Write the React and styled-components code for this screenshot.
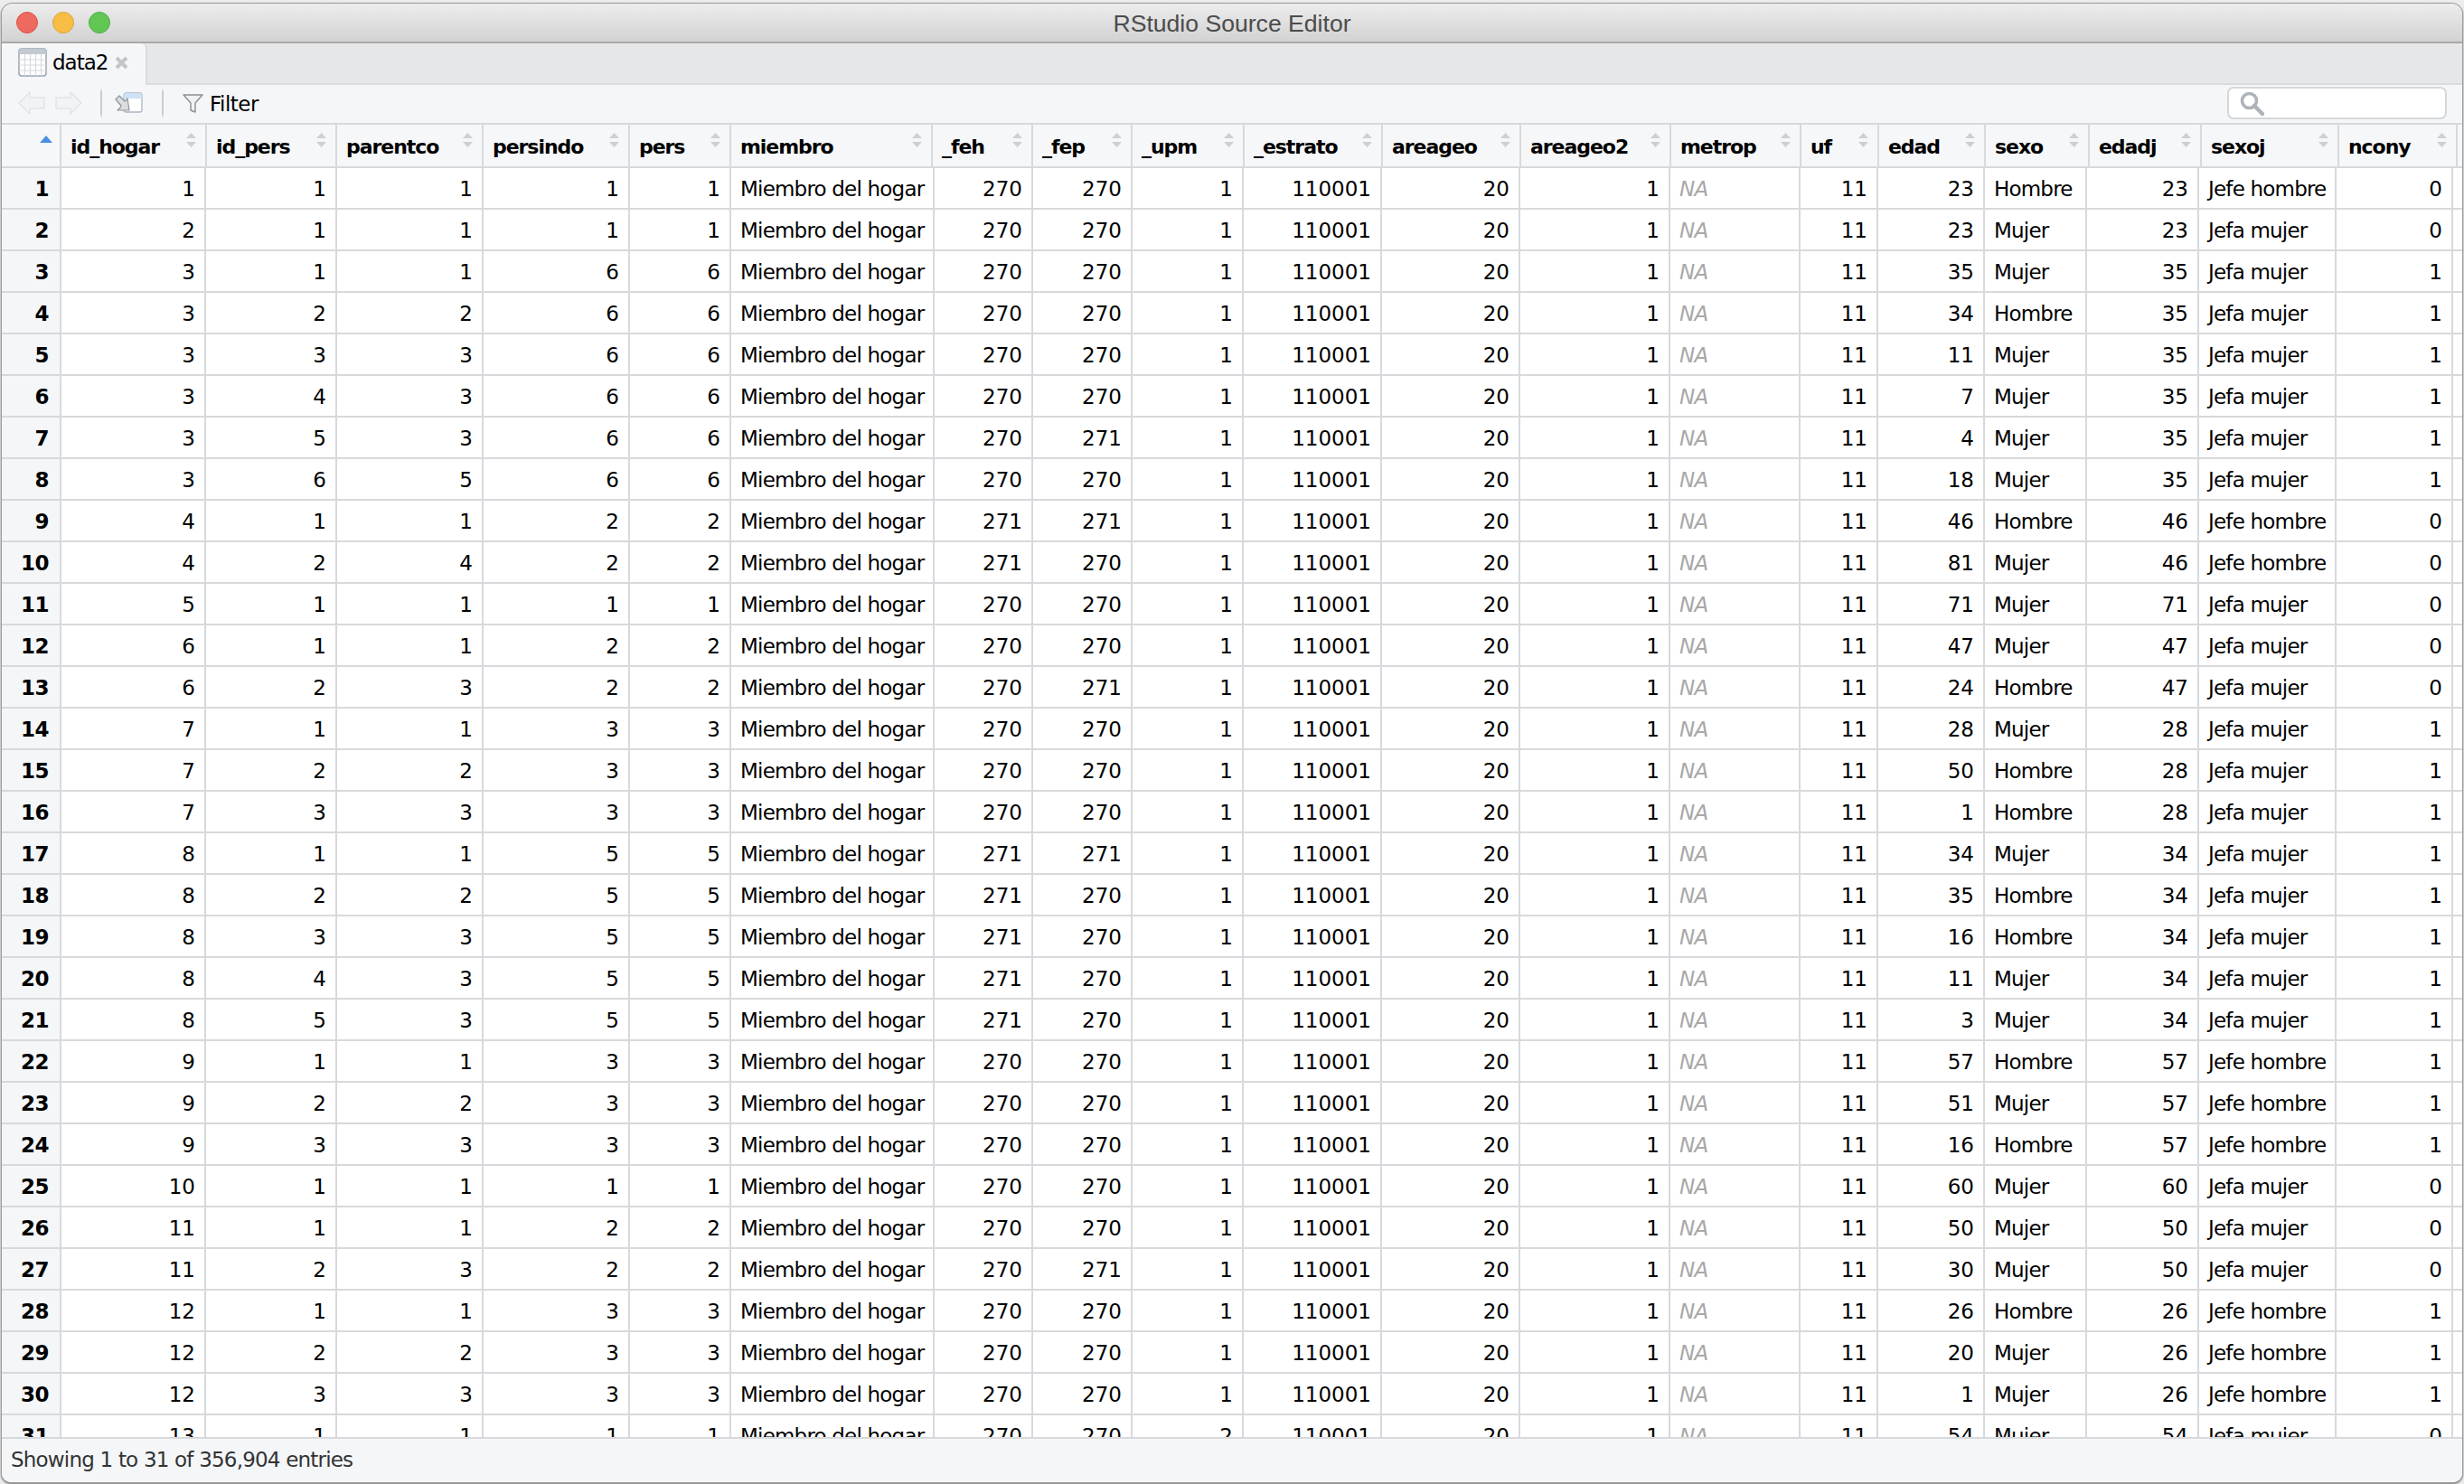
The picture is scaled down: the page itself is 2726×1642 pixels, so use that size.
import React from 'react';
import styled, { createGlobalStyle } from 'styled-components';

const Global = createGlobalStyle`
  html, body { margin: 0; padding: 0; background: #ececec; }
  #root { width: 2726px; height: 1642px; }
`;

const headCols = '66px 161px 144px 162px 162px 112px 223px 111px 110px 124px 153px 153px 166px 144px 86px 118px 115px 124px 152px 131px 1fr';
const bodyCols = '66px 160px 145px 162px 162px 112px 225px 109px 110px 123px 153px 153px 166px 144px 86px 118px 113px 124px 152px 129px 1fr';

const Page = styled.div`
  box-sizing: border-box;
  width: 2726px;
  height: 1642px;
  padding: 4px 2px 2px;
  overflow: hidden;
`;
const Window = styled.div`
  width: 2722px;
  height: 1636px;
  display: flex;
  flex-direction: column;
  border-radius: 12px 12px 10px 10px;
  overflow: hidden;
  box-shadow: 0 0 0 1px #9c9c9c, 0 1px 2px 1px #777;
  background: #fff;
  color: #000;
  font-family: "DejaVu Sans", sans-serif;
`;
const TitleBar = styled.div`
  flex: none;
  box-sizing: border-box;
  height: 44px;
  display: grid;
  grid-template-columns: 1fr auto 1fr;
  align-items: center;
  background: linear-gradient(#ededed, #d2d2d2);
  border-bottom: 2px solid #a9a9a9;
`;
const Lights = styled.div`
  display: flex;
  gap: 16px;
  padding-left: 16px;
`;
const Light = styled.span`
  box-sizing: border-box;
  width: 24px;
  height: 24px;
  border-radius: 50%;
  background: ${p => p.$fill};
  border: 1px solid ${p => p.$edge};
`;
const Title = styled.div`
  padding-top: 2px;
  font-family: "Liberation Sans", sans-serif;
  font-size: 26.6px;
  color: #4c4c4c;
`;
const TabBar = styled.div`
  flex: none;
  height: 46px;
  display: flex;
  background: #e6e7e9;
`;
const Tab = styled.div`
  box-sizing: border-box;
  width: 161px;
  display: flex;
  align-items: center;
  padding: 0 0 4px 18px;
  background: #f4f6f8;
  border-right: 2px solid #d9dbde;
  border-top-right-radius: 6px;
  font-size: 23px;
`;
const TabName = styled.span`
  margin-left: 6px;
  letter-spacing: -1px;
`;
const TabClose = styled.svg`
  margin-left: 8px;
  width: 15px;
  height: 15px;
`;
const TabFill = styled.div`
  flex: 1;
  border-bottom: 2px solid #d9dbde;
`;
const Toolbar = styled.div`
  flex: none;
  box-sizing: border-box;
  height: 44px;
  display: flex;
  align-items: center;
  padding: 0 17px 2px 18px;
  background: #f4f6f8;
  border-bottom: 2px solid #d7d9dc;
`;
const Separator = styled.span`
  width: 2px;
  height: 34px;
  background: linear-gradient(#f4f6f8, #c9ccd0 15%, #c9ccd0 85%, #f4f6f8);
  margin: ${p => p.$margin};
`;
const ToolIcon = styled.svg`
  flex: none;
  display: block;
  margin: ${p => p.$margin || '0'};
`;
const FilterLabel = styled.span`
  margin-left: 7px;
  padding-top: 2px;
  font-size: 23px;
  letter-spacing: -0.5px;
`;
const SearchBox = styled.div`
  box-sizing: border-box;
  margin-left: auto;
  width: 243px;
  height: 36px;
  display: flex;
  align-items: center;
  padding-left: 12px;
  background: #fff;
  border: 2px solid #d5d8db;
  border-radius: 7px;
`;
const TableArea = styled.div`
  flex: 1;
  min-height: 0;
  overflow: hidden;
`;
const HeadRow = styled.div`
  display: grid;
  grid-template-columns: ${headCols};
  height: 48px;
  background: #f6f7f9;
`;
const HeadCell = styled.div`
  box-sizing: border-box;
  position: relative;
  display: flex;
  align-items: center;
  padding: 2px 0 0 10px;
  font-size: 22px;
  font-weight: 700;
  letter-spacing: -1.05px;
  white-space: nowrap;
  border-right: 2px solid #d7d9dc;
  border-bottom: 2px solid #d7d9dc;
`;
const SortIcon = styled.svg`
  position: absolute;
  top: 9px;
  right: 10px;
`;
const CornerIcon = styled.svg`
  position: absolute;
  top: 12px;
  right: 8px;
`;
const BodyRow = styled.div`
  display: grid;
  grid-template-columns: ${bodyCols};
  height: 46px;
`;
const RowNumber = styled.div`
  box-sizing: border-box;
  display: flex;
  align-items: center;
  justify-content: flex-end;
  padding: 2px 12px 0 0;
  background: #f4f6f8;
  font-size: 23px;
  font-weight: 700;
  letter-spacing: -0.5px;
  border-right: 2px solid #d7d9dc;
  border-bottom: 2px solid #d7d9dc;
`;
const Cell = styled.div`
  box-sizing: border-box;
  display: flex;
  align-items: center;
  justify-content: ${p => (p.$num ? 'flex-end' : 'flex-start')};
  padding: ${p => (p.$num ? '2px 10px 0 0' : '2px 0 0 10px')};
  font-size: 23px;
  letter-spacing: ${p => (p.$num ? '0' : '-0.8px')};
  white-space: nowrap;
  overflow: hidden;
  border-right: 2px solid #d7d9dc;
  border-bottom: 2px solid #d7d9dc;
`;
const NaText = styled.span`
  color: #a8a8a8;
  font-style: italic;
`;
const StatusBar = styled.div`
  flex: none;
  box-sizing: border-box;
  height: 50px;
  display: flex;
  align-items: center;
  padding: 0 0 2px 10px;
  background: #f4f6f8;
  border-top: 2px solid #d7d9dc;
  color: #333;
  font-size: 23px;
  letter-spacing: -0.8px;
`;

const columns = ['id_hogar', 'id_pers', 'parentco', 'persindo', 'pers', 'miembro', '_feh', '_fep', '_upm', '_estrato', 'areageo', 'areageo2', 'metrop', 'uf', 'edad', 'sexo', 'edadj', 'sexoj', 'ncony'];

const HM = 'Jefe hombre';
const JM = 'Jefa mujer';
// id_hogar, id_pers, parentco, persindo, pers, _feh, _fep, _upm, edad, sexo, edadj, sexoj, ncony
const rows = [
  [1, 1, 1, 1, 1, 270, 270, 1, 23, 'Hombre', 23, HM, 0],
  [2, 1, 1, 1, 1, 270, 270, 1, 23, 'Mujer', 23, JM, 0],
  [3, 1, 1, 6, 6, 270, 270, 1, 35, 'Mujer', 35, JM, 1],
  [3, 2, 2, 6, 6, 270, 270, 1, 34, 'Hombre', 35, JM, 1],
  [3, 3, 3, 6, 6, 270, 270, 1, 11, 'Mujer', 35, JM, 1],
  [3, 4, 3, 6, 6, 270, 270, 1, 7, 'Mujer', 35, JM, 1],
  [3, 5, 3, 6, 6, 270, 271, 1, 4, 'Mujer', 35, JM, 1],
  [3, 6, 5, 6, 6, 270, 270, 1, 18, 'Mujer', 35, JM, 1],
  [4, 1, 1, 2, 2, 271, 271, 1, 46, 'Hombre', 46, HM, 0],
  [4, 2, 4, 2, 2, 271, 270, 1, 81, 'Mujer', 46, HM, 0],
  [5, 1, 1, 1, 1, 270, 270, 1, 71, 'Mujer', 71, JM, 0],
  [6, 1, 1, 2, 2, 270, 270, 1, 47, 'Mujer', 47, JM, 0],
  [6, 2, 3, 2, 2, 270, 271, 1, 24, 'Hombre', 47, JM, 0],
  [7, 1, 1, 3, 3, 270, 270, 1, 28, 'Mujer', 28, JM, 1],
  [7, 2, 2, 3, 3, 270, 270, 1, 50, 'Hombre', 28, JM, 1],
  [7, 3, 3, 3, 3, 270, 270, 1, 1, 'Hombre', 28, JM, 1],
  [8, 1, 1, 5, 5, 271, 271, 1, 34, 'Mujer', 34, JM, 1],
  [8, 2, 2, 5, 5, 271, 270, 1, 35, 'Hombre', 34, JM, 1],
  [8, 3, 3, 5, 5, 271, 270, 1, 16, 'Hombre', 34, JM, 1],
  [8, 4, 3, 5, 5, 271, 270, 1, 11, 'Mujer', 34, JM, 1],
  [8, 5, 3, 5, 5, 271, 270, 1, 3, 'Mujer', 34, JM, 1],
  [9, 1, 1, 3, 3, 270, 270, 1, 57, 'Hombre', 57, HM, 1],
  [9, 2, 2, 3, 3, 270, 270, 1, 51, 'Mujer', 57, HM, 1],
  [9, 3, 3, 3, 3, 270, 270, 1, 16, 'Hombre', 57, HM, 1],
  [10, 1, 1, 1, 1, 270, 270, 1, 60, 'Mujer', 60, JM, 0],
  [11, 1, 1, 2, 2, 270, 270, 1, 50, 'Mujer', 50, JM, 0],
  [11, 2, 3, 2, 2, 270, 271, 1, 30, 'Mujer', 50, JM, 0],
  [12, 1, 1, 3, 3, 270, 270, 1, 26, 'Hombre', 26, HM, 1],
  [12, 2, 2, 3, 3, 270, 270, 1, 20, 'Mujer', 26, HM, 1],
  [12, 3, 3, 3, 3, 270, 270, 1, 1, 'Mujer', 26, HM, 1],
  [13, 1, 1, 1, 1, 270, 270, 2, 54, 'Mujer', 54, JM, 0],
];

const TableGlyph = () => (
  <ToolIcon width="32" height="32" viewBox="0 0 32 32">
    <rect x="1" y="1" width="30" height="30" rx="3" fill="#fff" stroke="#98a4b0" strokeWidth="1.5" />
    <path d="M1 7V4a3 3 0 0 1 3-3h24a3 3 0 0 1 3 3v3z" fill="#c3cad2" />
    <path d="M1 13h30M1 19h30M1 25h30M7.5 7v24M13.5 7v24M19.5 7v24M25.5 7v24" stroke="#d5dae0" strokeWidth="1.2" fill="none" />
  </ToolIcon>
);
const ArrowLeft = () => (
  <ToolIcon width="30" height="26" viewBox="0 0 30 26">
    <path d="M1 13 13 1v6h16v12H13v6z" fill="#f1f3f5" stroke="#e2e4e6" strokeWidth="1.5" strokeLinejoin="round" />
  </ToolIcon>
);
const ArrowRight = () => (
  <ToolIcon width="30" height="26" viewBox="0 0 30 26" $margin="0 0 0 11px">
    <path d="M29 13 17 1v6H1v12h16v6z" fill="#f1f3f5" stroke="#e2e4e6" strokeWidth="1.5" strokeLinejoin="round" />
  </ToolIcon>
);
const PopOut = () => (
  <ToolIcon width="31" height="24" viewBox="0 0 31 24">
    <rect x="10" y="1" width="20" height="21" rx="2.5" fill="#fff" stroke="#a9b5c1" strokeWidth="1.3" />
    <path d="M10 7V3.5A2.5 2.5 0 0 1 12.500 1h15A2.500 2.500 0 0 1 30 3.500V7z" fill="#cfe2f5" />
    <path d="M1 8 5 4l6 6 3-3 2 13H3l3-3 1-2z" fill="#dcdee0" stroke="#8d959d" strokeWidth="1.2" strokeLinejoin="round" />
  </ToolIcon>
);
const Funnel = () => (
  <ToolIcon width="23" height="21" viewBox="0 0 23 21" $margin="0 0 0 21px">
    <path d="M1 1h21l-8 9v10l-5-2v-8z" fill="#f0f1f2" stroke="#8c8f92" strokeWidth="1.4" strokeLinejoin="round" />
  </ToolIcon>
);
const Magnifier = () => (
  <svg width="27" height="27" viewBox="0 0 27 27" style={{ display: 'block' }}>
    <circle cx="10.500" cy="10.500" r="8" fill="none" stroke="#adb3b9" strokeWidth="3.600" />
    <path d="M16 16l9 9" stroke="#adb3b9" strokeWidth="4.500" strokeLinecap="round" />
  </svg>
);
const SortGlyph = () => (
  <SortIcon width="11" height="16" viewBox="0 0 11 16">
    <path d="M5.500 0 11 6H0z" fill="#ccd0d4" />
    <path d="M0 10h11l-5.500 6z" fill="#ccd0d4" />
  </SortIcon>
);

export default function App() {
  return (
    <Page>
      <Global />
      <Window>
        <TitleBar>
          <Lights>
            <Light $fill="#ee6a5f" $edge="#d9534a" />
            <Light $fill="#f8bd45" $edge="#dfa434" />
            <Light $fill="#62c655" $edge="#4fae44" />
          </Lights>
          <Title>RStudio Source Editor</Title>
        </TitleBar>
        <TabBar>
          <Tab>
            <TableGlyph />
            <TabName>data2</TabName>
            <TabClose viewBox="0 0 15 15">
              <path d="M2 2l11 11M13 2 2 13" stroke="#c4c5c7" strokeWidth="4" />
            </TabClose>
          </Tab>
          <TabFill />
        </TabBar>
        <Toolbar>
          <ArrowLeft />
          <ArrowRight />
          <Separator $margin="0 14px 0 20px" />
          <PopOut />
          <Separator $margin="0 0 0 21px" />
          <Funnel />
          <FilterLabel>Filter</FilterLabel>
          <SearchBox>
            <Magnifier />
          </SearchBox>
        </Toolbar>
        <TableArea>
          <HeadRow>
            <HeadCell>
              <CornerIcon width="14" height="8" viewBox="0 0 14 8">
                <path d="M7 0 14 8H0z" fill="#4a90e2" />
              </CornerIcon>
            </HeadCell>
            {columns.map(c => (
              <HeadCell key={c}>
                {c}
                <SortGlyph />
              </HeadCell>
            ))}
            <HeadCell />
          </HeadRow>
          {rows.map((r, i) => (
            <BodyRow key={i}>
              <RowNumber>{i + 1}</RowNumber>
              <Cell $num>{r[0]}</Cell>
              <Cell $num>{r[1]}</Cell>
              <Cell $num>{r[2]}</Cell>
              <Cell $num>{r[3]}</Cell>
              <Cell $num>{r[4]}</Cell>
              <Cell>Miembro del hogar</Cell>
              <Cell $num>{r[5]}</Cell>
              <Cell $num>{r[6]}</Cell>
              <Cell $num>{r[7]}</Cell>
              <Cell $num>110001</Cell>
              <Cell $num>20</Cell>
              <Cell $num>1</Cell>
              <Cell><NaText>NA</NaText></Cell>
              <Cell $num>11</Cell>
              <Cell $num>{r[8]}</Cell>
              <Cell>{r[9]}</Cell>
              <Cell $num>{r[10]}</Cell>
              <Cell>{r[11]}</Cell>
              <Cell $num>{r[12]}</Cell>
              <Cell />
            </BodyRow>
          ))}
        </TableArea>
        <StatusBar>Showing 1 to 31 of 356,904 entries</StatusBar>
      </Window>
    </Page>
  );
}
